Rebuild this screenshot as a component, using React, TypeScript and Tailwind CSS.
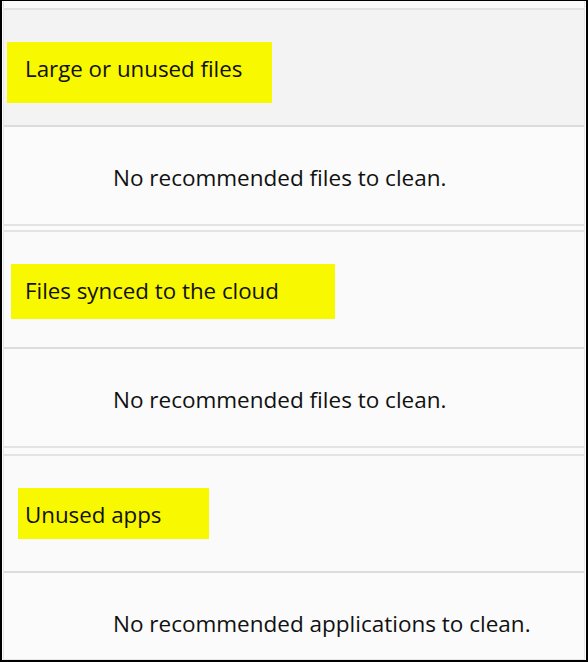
const font = { fontFamily: '"Open Sans", "Noto Sans", sans-serif' }

type Section = {
  title: string
  empty: string
  headerBg: string
  mark: string
  last?: boolean
}

const sections: Section[] = [
  {
    title: "Large or unused files",
    empty: "No recommended files to clean.",
    headerBg: "bg-[#f3f3f3]",
    mark: "ml-[3px] w-[265px] h-[61px] pl-[18px]",
  },
  {
    title: "Files synced to the cloud",
    empty: "No recommended files to clean.",
    headerBg: "bg-[#fafafa]",
    mark: "ml-[7px] w-[324px] h-[55px] pl-[14px]",
  },
  {
    title: "Unused apps",
    empty: "No recommended applications to clean.",
    headerBg: "bg-[#fafafa]",
    mark: "ml-[14px] w-[191px] h-[51px] pl-[7px]",
    last: true,
  },
]

function CleanupSection({ s }: { s: Section }) {
  return (
    <div className={`border-t-2 border-[#e3e3e3] ${s.last ? "" : "border-b-2"}`}>
      <div className={`h-[115px] pt-[32px] ${s.headerBg}`}>
        <div className={`bg-[#f8f800] ${s.mark}`}>
          <div className="pt-[12px] text-[22.3px] leading-[30px] text-[#111] whitespace-nowrap" style={font}>
            {s.title}
          </div>
        </div>
      </div>
      <div
        className={`border-t-2 border-[#dcdcdc] bg-[#fbfbfb] pl-[109px] pt-[36px] ${
          s.last ? "h-[85px]" : "h-[99px]"
        }`}
      >
        <div className="text-[22.5px] leading-[30px] text-[#111] whitespace-nowrap" style={font}>
          {s.empty}
        </div>
      </div>
    </div>
  )
}

export default function App() {
  return (
    <div className="w-[588px] h-[662px] bg-[#fdfdfd] border-black border-t border-l-2 border-r-2 border-b-2 overflow-hidden">
      <div className="h-full mx-px mb-px border-x border-b border-[#e6e6e6] bg-[#fbfbfb] pt-[7px] flex flex-col">
        <CleanupSection s={sections[0]} />
        <div className="h-[4px] shrink-0" />
        <CleanupSection s={sections[1]} />
        <div className="h-[6px] shrink-0" />
        <CleanupSection s={sections[2]} />
      </div>
    </div>
  )
}
